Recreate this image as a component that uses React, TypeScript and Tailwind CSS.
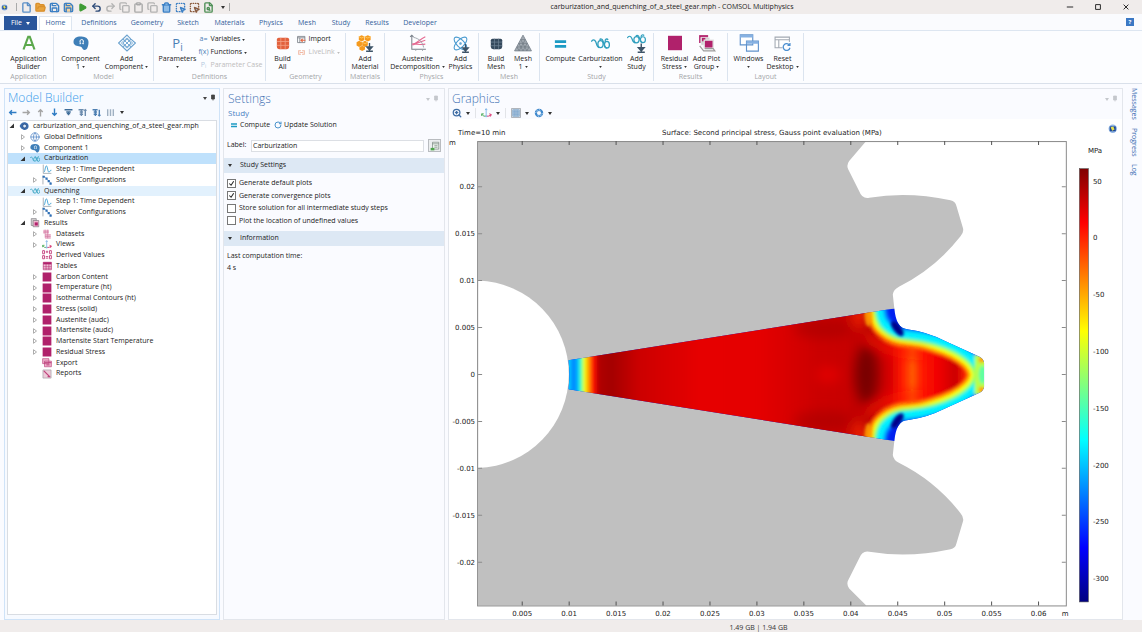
import React, { useState } from 'react';
import {
  Atom,
  Clipboard,
  Copy,
  File,
  FileSearch,
  FolderOpen,
  Globe,
  Play,
  Redo2,
  RotateCw,
  Save,
  SquareDashedMousePointer,
  Trash2,
  Undo2,
  ZoomIn,
} from 'lucide-react';

const MAGENTA = '#b0216b';

/* ---------- icons ---------- */

const Svg = ({ children, className = 'h-4 w-4' }: { children: React.ReactNode; className?: string }) => (
  <svg viewBox="0 0 16 16" fill="none" className={`shrink-0 ${className}`} aria-hidden="true">
    {children}
  </svg>
);

const Down = ({ className = 'text-[#333]', small = false }: { className?: string; small?: boolean }) => (
  <svg
    viewBox="0 0 4 3"
    className={`inline-block shrink-0 ${small ? 'h-0.5 w-[3px]' : 'h-[3px] w-1'} ${className}`}
    fill="currentColor"
    aria-hidden="true"
  >
    <path d="M0 0h4L2 3z" />
  </svg>
);

const DropArrow = <path d="M12 8v4M9.6 11.5h4.8L12 14.2zM9 15.3h6" stroke="#3d5468" strokeWidth="1.2" fill="#3d5468" />;

const icons: Record<string, React.ReactNode> = {
  app: <path d="M2.5 14.5 7.2 1.8h1.6l4.7 12.7M4.4 10h7.2" stroke="#5ba84c" strokeWidth="2.1" />,
  component: (
    <>
      <path d="M.5 7C.5 3 4 1.200 8.500 1.500c4.200.2 7 2.300 7 5.500 0 3.600-1 8-4 8-2.300 0-1.700-3-4.500-3.500C4 11 .5 10.500.5 7z" fill="#3f7fb8" />
      <path d="M6.500 8.700h1.300C6.500 7 6.700 4.500 8.700 4.500s2.200 2.500.9 4.200h1.300" stroke="#fff" strokeWidth="1" />
    </>
  ),
  addComponent: (
    <g stroke="#6aa2cf" strokeWidth="1">
      <path d="m8 1 3.500 3.500L15.500 8 8 15 .5 8z" />
      <path d="M8 4.500 11.500 8 8 11.500 4.500 8zM4.500 4.500 8 8M11.500 4.500 8 8M4.500 11.500 8 8l3.500 3.500M3 8l5-4.500L13 8l-5 4.500z" strokeWidth=".8" />
    </g>
  ),
  buildAll: (
    <>
      <path d="M3 2h10q2 0 2 2v8q0 3-3 3H4q-3 0-3-3V4q0-2 2-2z" fill="#e2613d" />
      <path d="M5.500 2v13M10.500 2v13M1 6.300h14M1 10.700h14" stroke="#f4a286" strokeWidth=".9" />
    </>
  ),
  buildMesh: (
    <>
      <path d="M3 2h10q2 0 2 2v8q0 3-3 3H4q-3 0-3-3V4q0-2 2-2z" fill="#34495c" />
      <path d="M5.500 2v13M10.500 2v13M1 6.300h14M1 10.700h14" stroke="#6f8496" strokeWidth=".9" />
    </>
  ),
  mesh: (
    <>
      <path d="M8 1 15.500 15H.5z" fill="#a2aab2" stroke="#7b858e" strokeWidth=".8" />
      <path d="M6 5h4M4.300 8.300h7.400M2.600 11.500h10.800M6 5l5.500 10M10 5 4.500 15M4.300 8.300 8 15l3.700-6.700M2.600 11.500l2 3.500M13.400 11.500l-2 3.500" stroke="#6f7982" strokeWidth=".6" />
    </>
  ),
  material: (
    <>
      <path d="m5 1 2.500 1.300v3L5 6.600 2.500 5.300v-3zM10.500 1 13 2.300v3l-2.500 1.300L8 5.300v-3zM2.800 6 5.300 7.300v3l-2.500 1.300L.5 10.300v-3zM8 6l2.500 1.300v3L8 11.600l-2.500-1.300v-3zM5.500 10.500 8 11.800v2L5.500 15 3 13.800v-2z" fill="#f59a1d" />
      <path d="m2.500 2.300 2.500 1.300 2.500-1.300M8 2.300l2.500 1.300L13 2.300M5.500 7.300 8 8.600l2.500-1.300" stroke="#ffc860" strokeWidth=".8" />
      {DropArrow}
    </>
  ),
  austenite: (
    <>
      <path d="M2.500 1v12.500H15M1 2.500 2.500 1 4 2.500" stroke="#777f88" strokeWidth=".9" />
      <path d="M2.500 9.500c3 0 5-3.500 12-7M4 9.500c4-1 6-3 10.500-4M3 8.500c5 1 8 1 11.500.5" stroke="#e56a92" strokeWidth="1" />
      <path d="M4 3c5 1 8 4 9 9M6 14v1M12 14v1" stroke="#9aa0a8" strokeWidth=".8" />
    </>
  ),
  study: (
    <g stroke="#2f9fbe" strokeWidth="1.100">
      <path d="M.3 6.500C1 4.500 3 4.200 4 6.500c.8 2 1 5 3 5" />
      <ellipse cx="8" cy="8.500" rx="2.200" ry="3" />
      <ellipse cx="13.400" cy="9" rx="2.100" ry="2.800" />
      <path d="M8 5.500c-1.500-2 1.500-2 2.200.5s1 5.500 3.200 5.800M12 6.800c-.5-2.800 1.500-3 2.500-2" />
    </g>
  ),
  addStudy: (
    <>
      <g stroke="#2f9fbe" strokeWidth="1">
        <path d="M.3 3.500C1 1.500 3 1.200 4 3.500c.8 2 1 4 3 4" />
        <ellipse cx="8" cy="4.800" rx="2.200" ry="2.600" />
        <ellipse cx="13.400" cy="4.800" rx="2.100" ry="2.500" />
        <path d="M8 2.200C7 .8 9.800.8 10.300 2.800s1 4 3.100 4.500M12 2.800C11.500.5 13.500.5 14.500 1.200" />
      </g>
      {DropArrow}
    </>
  ),
  compute: <path d="M2 4.500h12v3H2zM2 9.500h12v3H2z" fill="#1d9bc4" />,
  square: <path d="M1 .8h14v14.400H1z" fill={MAGENTA} />,
  plotGroup: (
    <>
      <path d="M1 1h8v7H1z" fill={MAGENTA} />
      <path d="M2.500 3h8v7h-8z" fill="#d2d2d2" stroke="#fff" strokeWidth=".5" />
      <path d="M3.500 3.500h3v3h-3z" fill={MAGENTA} />
      <path d="M5.500 5.500h8v7h-8z" fill={MAGENTA} stroke="#e3e3e3" strokeWidth="1.200" />
      <path d="M1.500 10.500 5 15h10l-1.500-2H6" stroke="#9b9b9b" strokeWidth="1" />
    </>
  ),
  windows: (
    <>
      <path d="M1 1.500h10v8H1zM6 6.500h9.500v8H6z" fill="#fff" stroke="#5f92cc" strokeWidth=".9" />
      <path d="M1 1.500h10v2H1zM6 6.500h9.500v2H6z" fill="#86b1e2" />
    </>
  ),
  reset: (
    <>
      <path d="M1 2h13.500v10H1zM1 4.500h13.500M4.500 4.500V12" stroke="#a2a9b2" strokeWidth="1" fill="#fff" />
      <path d="M8 6.500h8V15H8z" fill="#fcfdff" />
      <path d="M14.500 9.500a3.200 3.200 0 1 0 .5 2.500M15 7.500v2.300h-2.300" stroke="#4c8fd0" strokeWidth="1.200" />
    </>
  ),
  steps: (
    <>
      <path d="M2 1v14h13" stroke="#9099a3" strokeWidth="1.200" />
      <path d="M3 13C5 13 5 3 7 3s2 10 4 10 2-4 4-3" stroke="#2c97cf" strokeWidth="1.300" />
    </>
  ),
  solver: (
    <>
      <path d="M1.500 1v14" stroke="#9099a3" strokeWidth="1.200" />
      <path d="M1.500 2 6 4l3 4 6 5" stroke="#86abd3" strokeWidth="1.200" />
      <path d="M1 1h3.500v3.500H1zM5.500 4h3.500v3.500H5.500zM9 8h3.500v3.500H9zM12 12h3.500v3.500H12z" fill="#2f6fb5" />
    </>
  ),
  root: (
    <>
      <path d="M1 8C3 3 7 1 11 2.500c4 1 5 5 4 8s-5 5-8 3.500S3 12 1 8z" fill="#3a6bab" />
      <circle cx="9" cy="8" r="3" fill="#dcebfa" stroke="#1f3f70" />
    </>
  ),
  results: (
    <>
      <path d="M2 1h8v11H2z" fill="#d7d3d5" stroke="#77737a" />
      <path d="M5 4h9v10H5z" fill="#efb7cf" stroke="#77737a" />
      <path d="M7.500 7h5v5h-5z" fill={MAGENTA} />
    </>
  ),
  datasets: (
    <>
      <path d="M2 1h9v6H2zM5 8h9v7H5z" fill="#f3c9da" />
      <path d="M2 3.500h9M2 6h9M5 9.500h9M5 12h9M5 14.500h9M5 1v13M9 1v14" stroke="#cf6f9b" strokeWidth=".9" />
    </>
  ),
  axes: (
    <>
      <path d="M7.500 11V1M6 3l1.500-2L9 3" stroke="#7db4e6" strokeWidth="1.300" />
      <path d="M7.500 12Q4 13 1 9M1 11.500V8.500h3" stroke="#4bab58" strokeWidth="1.400" />
      <path d="M7.500 12q4 .5 7-2M12 8.500l3 1-1.500 3" stroke="#d8336f" strokeWidth="1.400" />
      <circle cx="7.500" cy="12" r="1.600" fill="#8fbfe6" />
    </>
  ),
  derived: (
    <>
      <path d="M1 1h3v5H1zM6 3h4M8 1v4M12 1h3v5h-3zM1 9h3v5H1zM6 10.500h4M6 13h4M12 9h3v5h-3z" stroke="#c64882" strokeWidth="1.500" />
    </>
  ),
  tables: (
    <>
      <path d="M2 2h13v12H2z" fill="#f6d2e1" stroke={MAGENTA} />
      <path d="M2 2h13v3.500H2z" fill={MAGENTA} />
      <path d="M2 8.500h13M2 11.500h13M6.500 5v9M11 5v9" stroke={MAGENTA} strokeWidth=".9" />
    </>
  ),
  exports: (
    <>
      <path d="M1 1h10v8H1zM4 5h11v9H4z" fill="#eeb0ca" stroke="#b93b78" />
      <path d="M4 7.500h11M7 11h5" stroke="#b93b78" strokeWidth="1.500" />
    </>
  ),
  reports: (
    <>
      <path d="M1.500 1.500h13v13h-13z" fill="#eccbd9" stroke="#9d9aa0" />
      <path d="m3 3 10 10M9 12h4" stroke="#c0437c" strokeWidth="2" />
    </>
  ),
  importFile: (
    <>
      <path d="M1 2.500h13v11H1zM1 5h13M5 5v8.500" stroke="#686f77" strokeWidth="1.300" />
      <path d="M15 9.500H8M10 7 7 9.500l3 2.500" stroke="#e2613d" strokeWidth="1.800" />
    </>
  ),
  link: <path d="M7 5H3v6h4M9 5h4v6H9M5 8h6" stroke="#f1b9a4" strokeWidth="1.800" />,
  globeLogo: (
    <>
      <circle cx="8" cy="8" r="7" fill="#8fb4e4" />
      <path d="M3 4h10v8H3z" fill="#1c4696" />
      <path d="M4.500 5.500 9 4l2 5-4 2z" fill="#e8e14f" />
    </>
  ),
  grid: (
    <>
      <path d="M.8.8h14.400v14.400H.8z" fill="#d9dde2" stroke="#8d949c" />
      <path d="M3 3h10v10H3zM3 6.300h10M3 9.700h10M6.300 3v10M9.700 3v10" stroke="#4d8dc9" />
    </>
  ),
  camera: (
    <>
      <circle cx="8" cy="8" r="5" stroke="#3d87cc" strokeWidth="3.500" />
      <path d="m8 1 2 4M15 8l-4 2M8 15l-2-4M1 8l4-2M3 3l4 1M13 13l-4-1" stroke="#d5e8f8" strokeWidth=".9" />
    </>
  ),
  create: (
    <>
      <path d="M4 2h10v11H4zM4 4.500h10M7 7.500h5M7 10h5" stroke="#6d7b74" fill="#eef5ee" />
      <path d="M1 11h6v4H1z" fill="#4fa64b" />
    </>
  ),
  pin: <path d="M5 2h6v8H5zM8 10v3" fill="currentColor" stroke="currentColor" strokeWidth="1.500" />,
};

/* ---------- title bar ---------- */

const QUICK = [
  { label: 'New', Icon: File, cls: 'text-[#5b8fc7]' },
  { label: 'Open', Icon: FolderOpen, cls: 'fill-[#e8a33d] text-[#d98f2b]' },
  { label: 'Save', Icon: Save, cls: 'text-[#3b7fc4]' },
  { label: 'Save as', Icon: Save, cls: 'fill-[#f3d29d] text-[#3b7fc4]' },
  { label: 'Run', Icon: Play, cls: 'fill-[#3f9c35] text-[#3f9c35] p-px' },
  { label: 'Undo', Icon: Undo2, cls: 'text-[#2d4a78]' },
  { label: 'Redo', Icon: Redo2, cls: 'text-[#b3b3b3]' },
  { label: 'Copy', Icon: Copy, cls: 'text-[#b3b3b3]' },
  { label: 'Paste', Icon: Clipboard, cls: 'text-[#a9a9a9]' },
  { label: 'Duplicate', Icon: Copy, cls: 'text-[#b3b3b3]' },
  { label: 'Delete', Icon: Trash2, cls: 'fill-[#8dbbe6] text-[#3b7fc4]' },
  { label: 'Select all', Icon: SquareDashedMousePointer, cls: 'fill-[#9cc3ea] text-[#3b7fc4]' },
  { label: 'Clear selection', Icon: SquareDashedMousePointer, cls: 'fill-[#9cc3ea] text-[#8a5a3c]' },
  { label: 'Find', Icon: FileSearch, cls: 'text-[#4e8f57]' },
];

const TitleBar = () => (
  <header className="relative flex h-3.5 items-center bg-[#f0eceb] text-[7px] text-[#222]">
    <Svg className="ml-px h-[7px] w-[7px]">{icons.globeLogo}</Svg>
    <span className="ml-2 h-2 w-px bg-[#aaa]" />
    <div className="ml-1 flex gap-1">
      {QUICK.map(({ label, Icon, cls }) => (
        <button key={label} aria-label={label} className="flex w-[10px] justify-center">
          <Icon size={11} strokeWidth={3} className={`shrink-0 ${cls}`} />
        </button>
      ))}
    </div>
    <span className="ml-2 flex items-center gap-1">
      <Down />
      <span className="h-2 w-px bg-[#aaa]" />
    </span>
    <div className="absolute inset-x-0 flex justify-center pl-[202px] leading-3">
      carburization_and_quenching_of_a_steel_gear.mph - COMSOL Multiphysics
    </div>
    <div className="relative ml-auto flex items-center gap-5 pr-3">
      {['M1 5h8', 'M2 2h6v6H2z', 'm2 2 6 6M8 2 2 8'].map((d, i) => (
        <button key={d} aria-label={['Minimize', 'Maximize', 'Close'][i]}>
          <svg viewBox="0 0 10 10" className="h-2 w-2" fill="none" stroke="#222" strokeWidth="1.200">
            <path d={d} />
          </svg>
        </button>
      ))}
    </div>
  </header>
);

const TABS = [
  { name: 'Definitions', width: 'w-[54px]' },
  { name: 'Geometry', width: 'w-[42px]' },
  { name: 'Sketch', width: 'w-[40px]' },
  { name: 'Materials', width: 'w-[43px]' },
  { name: 'Physics', width: 'w-[40px]' },
  { name: 'Mesh', width: 'w-[32px]' },
  { name: 'Study', width: 'w-[36px]' },
  { name: 'Results', width: 'w-[36px]' },
  { name: 'Developer', width: 'w-[50px]' },
];

const RibbonTabs = () => (
  <nav className="flex h-[17px] items-end border-b border-[#dde6f1] bg-[#fafbfe] pl-1 text-[7px] text-[#33609a]">
    <button className="flex h-[14px] w-[33px] items-center justify-center gap-1 bg-[#2a569c] text-white">
      File <Down className="text-white" />
    </button>
    <button className="ml-0.5 h-[14px] w-[33px] border border-b-0 border-[#dde6f1] bg-white">Home</button>
    {TABS.map(tab => (
      <button key={tab.name} className={`h-[14px] ${tab.width} text-center`}>
        {tab.name}
      </button>
    ))}
    <button aria-label="Help" className="mr-2 mb-1 ml-auto h-2 w-2 bg-[#3b78c4] text-[6px] leading-2 font-bold text-white">
      ?
    </button>
  </nav>
);

/* ---------- ribbon ---------- */

const Group = ({ name, width, children }: { name: string; width: string; children: React.ReactNode }) => (
  <section className={`flex h-12 shrink-0 flex-col justify-between border-r border-[#dbe4ef] ${width}`}>
    <div className="flex justify-center">{children}</div>
    <h2 className="text-center leading-2 text-[#a3a5a8]">{name}</h2>
  </section>
);

const Big = ({ icon, a, b, arrow, width }: { icon: React.ReactNode; a: string; b?: string; arrow?: boolean; width: string }) => (
  <button className={`flex flex-col items-center whitespace-nowrap leading-2 text-[#222] ${width}`}>
    <span className="mt-0.5 mb-1 flex h-4 items-center">{icon}</span>
    <span>{a}</span>
    <span className="flex h-2 items-center gap-0.5">
      {b}
      {arrow && <Down small />}
    </span>
  </button>
);

const Small = ({ icon, text, off, arrow }: { icon: React.ReactNode; text: string; off?: boolean; arrow?: boolean }) => (
  <button disabled={off} className={`flex h-[13px] items-center gap-0.5 whitespace-nowrap ${off ? 'text-[#bcbcbc]' : 'text-[#222]'}`}>
    <span className="flex w-[10px] justify-center text-[#4b7fb5]">{icon}</span>
    {text}
    {arrow && <Down small className={off ? 'text-[#bcbcbc]' : 'text-[#333]'} />}
  </button>
);

const Ribbon = () => (
  <div className="flex h-[53px] items-center overflow-hidden border-b border-[#d9e0ea] bg-[#fcfdff] pl-1 text-[7px]">
    <Group name="Application" width="w-[50px]">
      <Big icon={<Svg>{icons.app}</Svg>} a="Application" b="Builder" width="w-[46px]" />
    </Group>
    <Group name="Model" width="w-[100px]">
      <Big icon={<Svg>{icons.component}</Svg>} a="Component" b="1" arrow width="w-[46px]" />
      <Big icon={<Svg className="h-[18px] w-[18px]">{icons.addComponent}</Svg>} a="Add" b="Component" arrow width="w-[46px]" />
    </Group>
    <Group name="Definitions" width="w-[112px]">
      <Big icon={<span className="text-[13px] text-[#4b7fb5]">P<sub className="text-[10px]">i</sub></span>} a="Parameters" arrow width="w-[42px]" />
      <div className="w-[64px]">
        <Small icon="a=" text="Variables" arrow />
        <Small icon="f(x)" text="Functions" arrow />
        <Small icon={<span className="text-[#b4c9de]">Pᵢ</span>} text="Parameter Case" off />
      </div>
    </Group>
    <Group name="Geometry" width="w-[80px]">
      <Big icon={<Svg className="h-[14px] w-[14px]">{icons.buildAll}</Svg>} a="Build" b="All" width="w-[28px]" />
      <div className="w-[46px]">
        <Small icon={<Svg className="h-[9px] w-[9px]">{icons.importFile}</Svg>} text="Import" />
        <Small icon={<Svg className="h-[9px] w-[9px]">{icons.link}</Svg>} text="LiveLink" off arrow />
      </div>
    </Group>
    <Group name="Materials" width="w-[39px]">
      <Big icon={<Svg className="h-[18px] w-[18px]">{icons.material}</Svg>} a="Add" b="Material" width="w-[34px]" />
    </Group>
    <Group name="Physics" width="w-[94px]">
      <Big icon={<Svg className="h-[18px] w-[18px]">{icons.austenite}</Svg>} a="Austenite" b="Decomposition" arrow width="w-[58px]" />
      <Big
        icon={
          <span className="relative">
            <Atom size={17} strokeWidth={1.5} className="text-[#4a9bd0]" />
            <Svg className="absolute inset-0 h-[18px] w-[18px]">{DropArrow}</Svg>
          </span>
        }
        a="Add"
        b="Physics"
        width="w-[28px]"
      />
    </Group>
    <Group name="Mesh" width="w-[61px]">
      <Big icon={<Svg className="h-[13px] w-[13px]">{icons.buildMesh}</Svg>} a="Build" b="Mesh" width="w-[28px]" />
      <Big icon={<Svg className="h-[18px] w-[18px]">{icons.mesh}</Svg>} a="Mesh" b="1" arrow width="w-[26px]" />
    </Group>
    <Group name="Study" width="w-[114px]">
      <Big icon={<Svg className="h-[15px] w-[15px]">{icons.compute}</Svg>} a="Compute" width="w-[34px]" />
      <Big icon={<Svg className="h-[19px] w-[19px]">{icons.study}</Svg>} a="Carburization" arrow width="w-[46px]" />
      <Big icon={<Svg className="h-[19px] w-[19px]">{icons.addStudy}</Svg>} a="Add" b="Study" width="w-[26px]" />
    </Group>
    <Group name="Results" width="w-[74px]">
      <Big icon={<Svg>{icons.square}</Svg>} a="Residual" b="Stress" arrow width="w-[32px]" />
      <Big icon={<Svg className="h-[18px] w-[18px]">{icons.plotGroup}</Svg>} a="Add Plot" b="Group" arrow width="w-[32px]" />
    </Group>
    <Group name="Layout" width="w-[76px]">
      <Big icon={<Svg className="h-[20px] w-[20px]">{icons.windows}</Svg>} a="Windows" arrow width="w-[34px]" />
      <Big icon={<Svg className="h-[17px] w-[17px]">{icons.reset}</Svg>} a="Reset" b="Desktop" arrow width="w-[34px]" />
    </Group>
  </div>
);

/* ---------- model builder ---------- */

type Node = { text: string; icon: React.ReactNode; depth: number; state?: 'open' | 'closed' };

const TREE: Node[] = [
  { text: 'carburization_and_quenching_of_a_steel_gear.mph', icon: icons.root, depth: 0, state: 'open' },
  { text: 'Global Definitions', icon: null, depth: 1, state: 'closed' },
  { text: 'Component 1', icon: icons.component, depth: 1, state: 'closed' },
  { text: 'Carburization', icon: icons.study, depth: 1, state: 'open' },
  { text: 'Step 1: Time Dependent', icon: icons.steps, depth: 2 },
  { text: 'Solver Configurations', icon: icons.solver, depth: 2, state: 'closed' },
  { text: 'Quenching', icon: icons.study, depth: 1, state: 'open' },
  { text: 'Step 1: Time Dependent', icon: icons.steps, depth: 2 },
  { text: 'Solver Configurations', icon: icons.solver, depth: 2, state: 'closed' },
  { text: 'Results', icon: icons.results, depth: 1, state: 'open' },
  { text: 'Datasets', icon: icons.datasets, depth: 2, state: 'closed' },
  { text: 'Views', icon: icons.axes, depth: 2, state: 'closed' },
  { text: 'Derived Values', icon: icons.derived, depth: 2 },
  { text: 'Tables', icon: icons.tables, depth: 2 },
  { text: 'Carbon Content', icon: icons.square, depth: 2, state: 'closed' },
  { text: 'Temperature (ht)', icon: icons.square, depth: 2, state: 'closed' },
  { text: 'Isothermal Contours (ht)', icon: icons.square, depth: 2, state: 'closed' },
  { text: 'Stress (solid)', icon: icons.square, depth: 2, state: 'closed' },
  { text: 'Austenite (audc)', icon: icons.square, depth: 2, state: 'closed' },
  { text: 'Martensite (audc)', icon: icons.square, depth: 2, state: 'closed' },
  { text: 'Martensite Start Temperature', icon: icons.square, depth: 2, state: 'closed' },
  { text: 'Residual Stress', icon: icons.square, depth: 2, state: 'closed' },
  { text: 'Export', icon: icons.exports, depth: 2 },
  { text: 'Reports', icon: icons.reports, depth: 2 },
];

const INDENT = ['pl-px', 'pl-3', 'pl-6'];

const PanelTools = ({ className }: { className: string }) => (
  <span className={`flex items-center gap-0.5 ${className}`}>
    <Down className="" />
    <Svg className="h-2 w-2">{icons.pin}</Svg>
  </span>
);

const TOOLS: { label: string; d: string; cls: string }[] = [
  { label: 'Back', d: 'M15 8H3M7 4 3 8l4 4', cls: 'text-[#2f7cc4]' },
  { label: 'Forward', d: 'M1 8h12M9 4l4 4-4 4', cls: 'text-[#a5a5a5]' },
  { label: 'Up', d: 'M8 15V3M4 7l4-4 4 4', cls: 'text-[#a5a5a5]' },
  { label: 'Down', d: 'M8 1v12M4 9l4 4 4-4', cls: 'text-[#2f7cc4]' },
  { label: 'Show', d: 'M1 3h14M4 7h8M5 10h6M8 7v6', cls: 'text-[#3f6d99]' },
  { label: 'Collapse', d: 'M1 3h9M3 7h6M3 11h6M6 3v11M13 14V3M11 5l2-2 2 2', cls: 'text-[#6c8cae]' },
  { label: 'Expand', d: 'M1 3h9M3 7h6M3 11h6M6 3v11M13 3v11M11 12l2 2 2-2', cls: 'text-[#4d7fb2]' },
  { label: 'Columns', d: 'M3 2v12M8 2v12M13 2v12', cls: 'text-[#9fb0c2]' },
];

const ModelBuilder = () => {
  const [selected, setSelected] = useState(3);

  return (
    <aside className="flex w-[216px] shrink-0 flex-col border border-[#cfe3f8] bg-[#f7faff] px-0.5 pb-1">
      <div className="flex h-[17px] items-end justify-between pl-px">
        <h2 className="text-[12px] leading-4 font-light text-[#3b9cea]">Model Builder</h2>
        <PanelTools className="mb-1 text-[#444]" />
      </div>
      <div className="flex h-3 items-center gap-1 pl-px">
        {TOOLS.map(t => (
          <button key={t.label} aria-label={t.label} className={`w-[10px] ${t.cls}`}>
            <svg viewBox="0 0 16 16" className="h-[9px] w-[9px]" fill="none" stroke="currentColor" strokeWidth="2.500">
              <path d={t.d} />
            </svg>
          </button>
        ))}
        <Down />
      </div>
      <div className="mt-0.5 flex-1 border border-[#d9dde3] bg-white text-[7px] text-[#222]">
        <ul className="grid h-[258px] grid-rows-[repeat(24,minmax(0,1fr))]">
          {TREE.map((node, i) => (
            <li
              key={i}
              onClick={() => setSelected(i)}
              className={`flex min-h-0 items-center whitespace-nowrap ${INDENT[node.depth]} ${i === selected ? 'bg-[#bfe1fc]' : ''} ${i === 6 ? 'bg-[#e2f1fd]' : ''}`}
            >
              <svg viewBox="0 0 6 6" className="mr-1 h-[6px] w-[6px] shrink-0" fill="none" aria-hidden="true">
                {node.state === 'open' && <path d="M5 .5V5H.5z" fill="#333" />}
                {node.state === 'closed' && <path d="M1.500.7 4.500 3l-3 2.300z" stroke="#999" strokeWidth=".8" />}
              </svg>
              {node.icon ? <Svg className="mr-1 h-[10px] w-[10px]">{node.icon}</Svg> : <Globe size={10} className="mr-1 text-[#6190cb]" />}
              {node.text}
            </li>
          ))}
        </ul>
      </div>
    </aside>
  );
};

/* ---------- settings ---------- */

const Section = ({ title }: { title: string }) => (
  <h3 className="flex h-[15px] items-center gap-2 bg-[#dde8f4] pl-1 text-[#222]">
    <Down />
    {title}
  </h3>
);

const Check = ({ id, label, initial = false }: { id: string; label: string; initial?: boolean }) => {
  const [on, setOn] = useState(initial);
  return (
    <div className="flex items-center gap-[3px]">
      <input
        id={id}
        type="checkbox"
        checked={on}
        onChange={e => setOn(e.target.checked)}
        className="h-[9px] w-[9px] appearance-none border border-[#777] bg-white bg-center bg-no-repeat checked:bg-[url('data:image/svg+xml,%3Csvg%20xmlns=%22http://www.w3.org/2000/svg%22%20viewBox=%220%200%208%208%22%3E%3Cpath%20d=%22M1.500%204l2%202L6.500%201.500%22%20fill=%22none%22%20stroke=%22%23222%22%20stroke-width=%221.200%22/%3E%3C/svg%3E')]"
      />
      <label htmlFor={id}>{label}</label>
    </div>
  );
};

const Settings = () => {
  const [label, setLabel] = useState('Carburization');

  return (
    <section className="w-[222px] shrink-0 border border-[#e3e6ec] bg-[#fafbff] text-[7px] text-[#222]">
      <div className="flex h-[18px] items-end justify-between px-1">
        <h2 className="text-[12px] leading-4 font-light text-[#4674b4]">Settings</h2>
        <PanelTools className="mb-1 text-[#c4c7cc]" />
      </div>
      <p className="pl-1 text-[8px] leading-3 text-[#4a82c4]">Study</p>
      <div className="flex h-3 items-center gap-1 pl-1.5">
        <button className="flex items-center gap-0.5">
          <Svg className="h-2 w-2">{icons.compute}</Svg>Compute
        </button>
        <button className="flex items-center gap-0.5">
          <RotateCw size={8} strokeWidth={3} className="text-[#4a93cc]" />Update Solution
        </button>
      </div>
      <div className="mt-1 mb-0.5 flex h-[21px] items-center pl-[3px]">
        <label htmlFor="label" className="w-[24px]">Label:</label>
        <input
          id="label"
          value={label}
          onChange={e => setLabel(e.target.value)}
          className="h-3 min-w-0 flex-1 border border-[#dcdfe4] bg-white px-px"
        />
        <button aria-label="Create" className="mr-[3px] ml-1 flex h-[13px] w-[13px] items-center justify-center border border-[#b9bcc0] bg-[#eceeef]">
          <Svg className="h-[10px] w-[10px]">{icons.create}</Svg>
        </button>
      </div>
      <Section title="Study Settings" />
      <div className="my-1 grid h-[50px] grid-rows-4 pl-[3px]">
        <Check id="plots" label="Generate default plots" initial />
        <Check id="conv" label="Generate convergence plots" initial />
        <Check id="store" label="Store solution for all intermediate study steps" />
        <Check id="undef" label="Plot the location of undefined values" />
      </div>
      <Section title="Information" />
      <dl className="mt-1 pl-[3px] leading-3">
        <dt>Last computation time:</dt>
        <dd>4 s</dd>
      </dl>
    </section>
  );
};

/* ---------- graphics ---------- */

const STEP = 46.8;
const X_TICKS = ['0.005', '0.01', '0.015', '0.02', '0.025', '0.03', '0.035', '0.04', '0.045', '0.05', '0.055', '0.06'];
const Y_TICKS = ['0.02', '0.015', '0.01', '0.005', '0', '-0.005', '-0.01', '-0.015', '-0.02'];
const BAR_TICKS = [50, 0, -50, -100, -150, -200, -250, -300];

const JET = [
  [0, '#800000'],
  [0.125, '#ff0000'],
  [0.375, '#ffff00'],
  [0.625, '#00ffff'],
  [0.875, '#0000ff'],
  [1, '#000080'],
] as const;

// colours along the centre line of the tooth, by x
const CORE = [
  [570, '#00c8ff'],
  [574, '#0080ff'],
  [578, '#00b4ff'],
  [581, '#30ffd0'],
  [585, '#f4ff10'],
  [590, '#ff8a00'],
  [594, '#ff1000'],
  [600, '#b00000'],
  [612, '#a40000'],
  [640, '#cc0000'],
  [700, '#e60000'],
  [760, '#e40000'],
  [815, '#cc0000'],
  [845, '#c80000'],
  [858, '#c00000'],
  [866, '#b80000'],
  [876, '#bc0000'],
  [890, '#d80000'],
  [902, '#ff1c00'],
  [912, '#ff5a00'],
  [922, '#ff1800'],
  [938, '#f00000'],
  [955, '#cc0000'],
  [966, '#ff2000'],
] as const;

// outlines of one sector, symmetric about y = 374
const SECTOR =
  'M569 359.500 L894 308 Q895 318 898 323 Q901 328.500 908 328.800 Q926 331 944 340 L979 356 Q983 358 983.500 362 V386 Q983 390 979 392 L944 408 Q926 417 908 419.200 Q901 419.500 898 425 Q895 430 894 440 L569 388.500 Q571 374 569 359.500z';
const TOOTH =
  'M566 350 L850 290 L866 304 Q866 326 878 336 Q890 347 908 347.500 Q932 350 950 359 Q965 367 966 374 Q965 381 950 389 Q932 398 908 400.500 Q890 401 878 412 Q866 422 866 444 L850 460 L566 398z';
const BODY =
  'M479 141 H866 L849 161 Q846 165 848 169 L859 191 Q862 199 869 197.500 Q908 191 950 200 Q955 201 956 206 L962.500 228 Q963.500 232 960 236 Q935 268 899 286 Q893 289 892.500 294 L894 308 V440 L892.500 454 Q893 459 899 462 Q935 480 960 512 Q963.500 516 962.500 520 L956 542 Q955 547 950 548 Q908 557 869 550.500 Q862 549 859 557 L848 579 Q846 583 849 587 L866 604 H479z';

const BANDS = [
  { width: 42, color: '#0060ff' },
  { width: 37, color: '#00b0ff' },
  { width: 32, color: '#00f0ff' },
  { width: 20, color: '#50ffb0' },
  { width: 17, color: '#a8ff58' },
  { width: 13, color: '#f8ff08' },
  { width: 8, color: '#ffb000' },
  { width: 4, color: '#ff6000' },
];

const Plot = () => (
  <svg viewBox="450 119 671 498" className="block h-auto w-full" fontFamily="'DejaVu Sans', sans-serif" fontSize="7" fill="#222">
    <defs>
      <linearGradient id="jet" x1="0" y1="0" x2="0" y2="1">
        {JET.map(([at, color]) => <stop key={at} offset={at} stopColor={color} />)}
      </linearGradient>
      <linearGradient id="core" gradientUnits="userSpaceOnUse" x1="570" y1="0" x2="966" y2="0">
        {CORE.map(([x, color]) => <stop key={x} offset={(x - 570) / 396} stopColor={color} />)}
      </linearGradient>
      <clipPath id="sector"><path d={SECTOR} /></clipPath>
      <filter id="soft" x="-20%" y="-20%" width="140%" height="140%"><feGaussianBlur stdDeviation="1.500" /></filter>
      <filter id="wide" x="-60%" y="-60%" width="220%" height="220%"><feGaussianBlur stdDeviation="6" /></filter>
    </defs>

    <text x="459" y="135">Time=10 min</text>
    <text x="772" y="135" textAnchor="middle">Surface: Second principal stress, Gauss point evaluation (MPa)</text>
    <text x="450" y="145">m</text>
    <text x="1061" y="615">m</text>

    <path d={BODY} fill="#c0c0c0" />
    <path d="M479 280.050 A93.500 93.500 0 0 1 479 466.950z" fill="#fff" />

    <g clipPath="url(#sector)">
      <rect x="565" y="300" width="422" height="150" fill="#0020f0" />
      <g filter="url(#soft)">
        {BANDS.map(b => <path key={b.width} d={TOOTH} fill="none" stroke={b.color} strokeWidth={b.width} />)}
        <path d={TOOTH} fill="url(#core)" />
        <path d="M974 354v40h14v-40z" fill="#b8ff48" />
        <ellipse cx="982" cy="374" rx="4" ry="9" fill="#60ffa0" />
        <circle cx="981" cy="359" r="3" fill="#ffa000" />
        <circle cx="981" cy="389" r="3" fill="#ffa000" />
      </g>
      <g filter="url(#wide)">
        <ellipse cx="824" cy="328" rx="30" ry="10" fill="#a80000" opacity=".6" />
        <ellipse cx="824" cy="420" rx="30" ry="10" fill="#a80000" opacity=".6" />
        <ellipse cx="828" cy="374" rx="12" ry="8" fill="#f00000" opacity=".6" />
        <ellipse cx="859" cy="314" rx="6" ry="14" fill="#ff3000" opacity=".8" />
        <ellipse cx="859" cy="434" rx="6" ry="14" fill="#ff3000" opacity=".8" />
        <path d="M866 334q16 18 60 20M866 414q16-18 60-20" fill="none" stroke="#ff1800" strokeWidth="6" />
        <ellipse cx="866" cy="374" rx="11" ry="29" fill="#780000" />
      </g>
      <g filter="url(#soft)">
        <ellipse cx="868" cy="314" rx="4" ry="12" fill="#ffa000" opacity=".8" />
        <ellipse cx="868" cy="434" rx="4" ry="12" fill="#ffa000" opacity=".8" />
        <ellipse cx="897" cy="328" rx="4" ry="9" fill="#00008c" transform="rotate(-38 897 328)" />
        <ellipse cx="897" cy="420" rx="4" ry="9" fill="#00008c" transform="rotate(38 897 420)" />
      </g>
    </g>

    <g stroke="#8a8a8a" fill="none">
      <rect x="478.500" y="141.500" width="587" height="463" />
      {X_TICKS.map((t, i) => <path key={t} d={`M${523 + i * STEP} 141v4M${523 + i * STEP} 604v-4`} stroke="#555" />)}
      {Y_TICKS.map((t, i) => <path key={t} d={`M479 ${186.5 + i * STEP}h4M1065 ${186.5 + i * STEP}h-4`} />)}
    </g>
    {X_TICKS.map((t, i) => <text key={t} x={523 + i * STEP} y="615" textAnchor="middle">{t}</text>)}
    {Y_TICKS.map((t, i) => <text key={t} x="476" y={189 + i * STEP} textAnchor="end">{t}</text>)}

    <rect x="1078.500" y="168.500" width="9" height="432" fill="url(#jet)" stroke="#555" strokeWidth=".6" />
    <text x="1087" y="153">MPa</text>
    {BAR_TICKS.map((t, i) => (
      <text key={t} x="1092" y={183.5 + i * 56.6}>{t}</text>
    ))}
    <g transform="translate(1107 124) scale(.6)">{icons.globeLogo}</g>
  </svg>
);

const Graphics = () => (
  <main className="flex min-w-0 flex-1 flex-col border border-[#e3e6ec] bg-white">
    <div className="bg-[#fafbff]">
      <div className="flex h-[18px] items-end justify-between px-[3px]">
        <h2 className="text-[12px] leading-4 font-light text-[#4674b4]">Graphics</h2>
        <PanelTools className="mb-1 text-[#c4c7cc]" />
      </div>
      <div className="flex h-3 items-center gap-[5px] pl-[3px]">
        <button aria-label="Zoom" className="flex items-center gap-1">
          <ZoomIn size={10} strokeWidth={3} className="text-[#3f6ea5]" />
          <Down />
        </button>
        <span className="h-2.5 w-px bg-[#e2e4e8]" />
        <button aria-label="View" className="flex items-center gap-1">
          <Svg className="h-[11px] w-[11px]">{icons.axes}</Svg>
          <Down />
        </button>
        <span className="h-2.5 w-px bg-[#e2e4e8]" />
        <button aria-label="Grid" className="flex items-center gap-1">
          <Svg className="h-[10px] w-[10px]">{icons.grid}</Svg>
          <Down />
        </button>
        <button aria-label="Snapshot" className="flex items-center gap-1">
          <Svg className="h-[10px] w-[10px]">{icons.camera}</Svg>
          <Down />
        </button>
      </div>
    </div>
    <Plot />
  </main>
);

export default function App() {
  return (
    <div className="flex min-h-screen flex-col bg-[#fafbff] font-['Open_Sans','Noto_Sans',sans-serif]">
      <TitleBar />
      <RibbonTabs />
      <Ribbon />
      <div className="mt-1 flex flex-1 gap-[3px] pl-1">
        <ModelBuilder />
        <Settings />
        <Graphics />
        <nav className="flex w-4 flex-col items-center gap-2 text-[7px] leading-3 text-[#3569b0]">
          {['Messages', 'Progress', 'Log'].map(t => (
            <button key={t} className="[writing-mode:vertical-rl]">{t}</button>
          ))}
        </nav>
      </div>
      <footer className="flex h-3 items-end bg-[#f0eceb] text-[7px] leading-[9px] text-[#333]">
        <span className="mx-auto pl-[375px]">1.49 GB | 1.94 GB</span>
      </footer>
    </div>
  );
}
